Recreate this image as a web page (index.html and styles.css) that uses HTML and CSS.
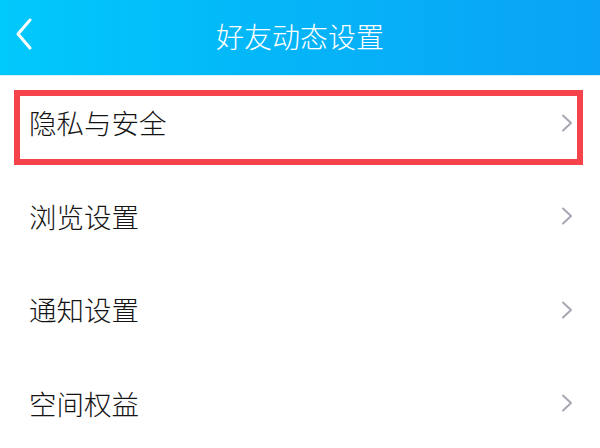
FILE: index.html
```html
<!DOCTYPE html>
<html lang="zh-CN">
<head>
<meta charset="utf-8">
<link rel="stylesheet" href="styles.css">
</head>
<body>
<div class="page">
  <header class="topbar">
    <span class="back">
      <svg width="18" height="32" viewBox="0 0 18 32"><path d="M15 2 L3 16 L15 30" fill="none" stroke="#fff" stroke-width="3" stroke-linecap="round" stroke-linejoin="round"/></svg>
    </span>
    <h1 class="title">好友动态设置</h1>
  </header>
  <ul class="list">
    <li class="row highlighted"><span class="label">隐私与安全</span><svg class="chev" width="12" height="18" viewBox="0 0 12 18"><path d="M2 1.5 L10 9 L2 16.5" fill="none" stroke="#a6a8b2" stroke-width="2" stroke-linecap="round" stroke-linejoin="round"/></svg></li>
    <li class="row"><span class="label">浏览设置</span><svg class="chev" width="12" height="18" viewBox="0 0 12 18"><path d="M2 1.5 L10 9 L2 16.5" fill="none" stroke="#a6a8b2" stroke-width="2" stroke-linecap="round" stroke-linejoin="round"/></svg></li>
    <li class="row"><span class="label">通知设置</span><svg class="chev" width="12" height="18" viewBox="0 0 12 18"><path d="M2 1.5 L10 9 L2 16.5" fill="none" stroke="#a6a8b2" stroke-width="2" stroke-linecap="round" stroke-linejoin="round"/></svg></li>
    <li class="row"><span class="label">空间权益</span><svg class="chev" width="12" height="18" viewBox="0 0 12 18"><path d="M2 1.5 L10 9 L2 16.5" fill="none" stroke="#a6a8b2" stroke-width="2" stroke-linecap="round" stroke-linejoin="round"/></svg></li>
  </ul>
</div>
</body>
</html>
```
FILE: styles.css
```css
html, body {
  margin: 0;
  padding: 0;
  background: #fff;
}
body {
  font-family: "Noto Sans CJK SC", "Noto Sans", sans-serif;
  width: 600px;
  height: 448px;
  overflow: hidden;
}
.page {
  display: flex;
  flex-direction: column;
}
.topbar {
  height: 75px;
  background: linear-gradient(90deg, #00c9fb 0%, #05b4f8 50%, #0aa3f6 100%);
  display: flex;
  align-items: center;
  justify-content: center;
  position: relative;
  border-bottom: 1px solid #d8f0fb;
}
.back {
  position: absolute;
  left: 15px;
  top: 18px;
  display: flex;
}
.title {
  margin: 0;
  color: #fff;
  font-size: 28px;
  font-weight: 300;
  line-height: 1;
  letter-spacing: 0;
  margin-top: -4px;
}
.list {
  list-style: none;
  margin: 0;
  padding: 0;
}
.row {
  height: 93.5px;
  display: flex;
  align-items: center;
  justify-content: space-between;
  padding: 0 27px 0 29px;
  box-sizing: border-box;
  position: relative;
}
.label {
  font-size: 27.5px;
  font-weight: 300;
  color: #141414;
  line-height: 1;
}
.chev {
  display: block;
}
.highlighted::after {
  content: "";
  position: absolute;
  left: 14px;
  top: 14px;
  width: 569px;
  height: 75px;
  box-sizing: border-box;
  border: 6px solid #f4434a;
}
```
